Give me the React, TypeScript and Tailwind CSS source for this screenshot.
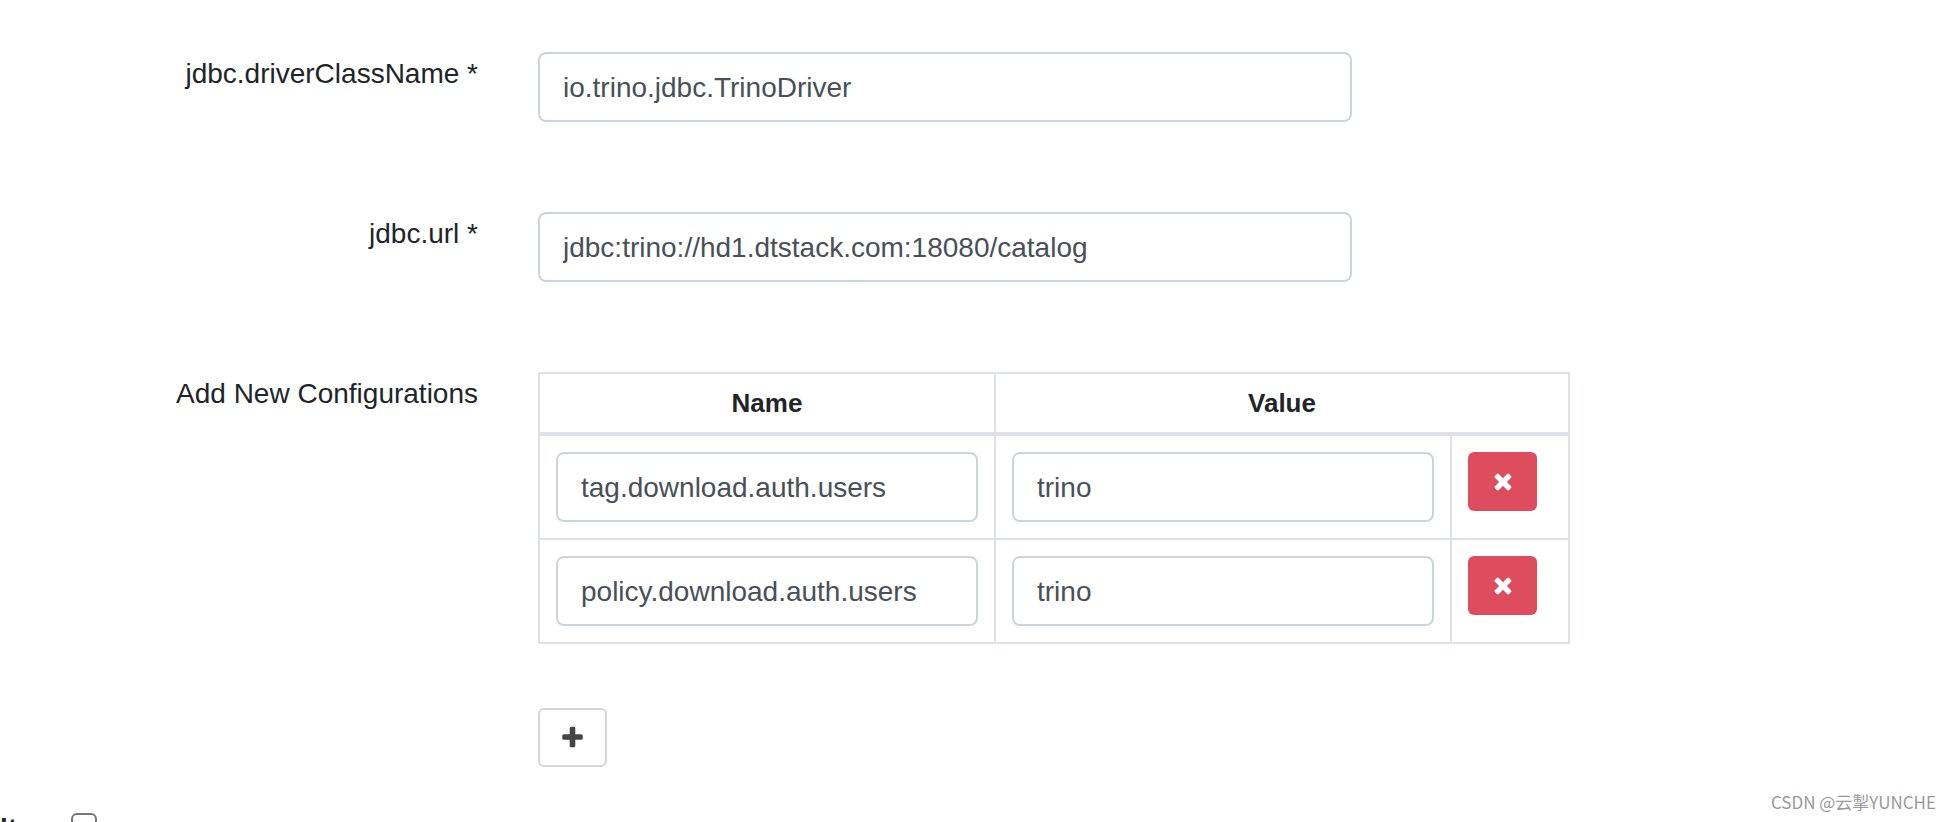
import { useState } from 'react';

interface Config {
    id: number;
    name: string;
    value: string;
}

const inputClass =
    'block w-full h-[70px] px-[23px] pt-0.5 text-[28px] leading-[42px] text-[#495057] bg-white border-2 border-[#ced4da] rounded-lg outline-none';

function CloseIcon() {
    return (
        <svg className="w-5 h-[26px]" viewBox="0 64 1408 1792" fill="currentColor" aria-hidden="true">
            <path d="M1298 1322q0 40-28 68l-136 136q-28 28-68 28t-68-28l-294-294-294 294q-28 28-68 28t-68-28l-136-136q-28-28-28-68t28-68l294-294-294-294q-28-28-28-68t28-68l136-136q28-28 68-28t68 28l294 294 294-294q28-28 68-28t68 28l136 136q28 28 28 68t-28 68l-294 294 294 294q28 28 28 68z" />
        </svg>
    );
}

function PlusIcon() {
    return (
        <svg className="w-[21px] h-[26px]" viewBox="0 64 1408 1792" fill="currentColor" aria-hidden="true">
            <path d="M1408 800v192q0 40-28 68t-68 28h-416v416q0 40-28 68t-68 28h-192q-40 0-68-28t-28-68v-416h-416q-40 0-68-28t-28-68v-192q0-40 28-68t68-28h416v-416q0-40 28-68t68-28h192q40 0 68 28t28 68v416h416q40 0 68 28t28 68z" />
        </svg>
    );
}

export default function App() {
    const [driver, setDriver] = useState('io.trino.jdbc.TrinoDriver');
    const [url, setUrl] = useState('jdbc:trino://hd1.dtstack.com:18080/catalog');
    const [configs, setConfigs] = useState<Config[]>([
        { id: 1, name: 'tag.download.auth.users', value: 'trino' },
        { id: 2, name: 'policy.download.auth.users', value: 'trino' },
    ]);
    const [audit, setAudit] = useState(false);

    const updateConfig = (id: number, changes: Partial<Config>) => {
        setConfigs(configs.map((c) => (c.id === id ? { ...c, ...changes } : c)));
    };

    return (
        <main className="relative h-screen overflow-hidden bg-white font-['Liberation_Sans',Arial,sans-serif] text-[28px] leading-[42px] text-[#212529]">
            <form className="pt-[52px] pl-[71px] pr-[133px]" onSubmit={(e) => e.preventDefault()}>
                <div className="grid grid-cols-12 mb-[90px]">
                    <label htmlFor="driver" className="col-span-3 pt-px pr-[30px] text-right">
                        jdbc.driverClassName *
                    </label>
                    <div className="col-span-6 px-[30px]">
                        <input id="driver" type="text" className={inputClass} value={driver} onChange={(e) => setDriver(e.target.value)} />
                    </div>
                </div>

                <div className="grid grid-cols-12 mb-[90px]">
                    <label htmlFor="url" className="col-span-3 pt-px pr-[30px] text-right">
                        jdbc.url *
                    </label>
                    <div className="col-span-6 px-[30px]">
                        <input id="url" type="text" className={inputClass} value={url} onChange={(e) => setUrl(e.target.value)} />
                    </div>
                </div>

                <div className="grid grid-cols-12">
                    <div id="configs-label" className="col-span-3 pt-px pr-[30px] text-right">
                        Add New Configurations
                    </div>
                    <div className="col-span-9 pl-[30px]">
                        <table aria-labelledby="configs-label" className="w-full max-w-[1032px] table-fixed border-collapse border-2 border-[#dee2e6]">
                            <colgroup>
                                <col />
                                <col />
                                <col className="w-[118px]" />
                            </colgroup>
                            <thead>
                                <tr className="h-[61px] text-[26px] leading-[26px]">
                                    <th className="border-2 border-b-4 border-[#dee2e6]">Name</th>
                                    <th colSpan={2} className="border-2 border-b-4 border-[#dee2e6]">Value</th>
                                </tr>
                            </thead>
                            <tbody>
                                {configs.map((config) => (
                                    <tr key={config.id}>
                                        <td className="p-4 border-2 border-[#dee2e6]">
                                            <input
                                                type="text"
                                                aria-label="Name"
                                                className={inputClass}
                                                value={config.name}
                                                onChange={(e) => updateConfig(config.id, { name: e.target.value })}
                                            />
                                        </td>
                                        <td className="p-4 border-2 border-[#dee2e6]">
                                            <input
                                                type="text"
                                                aria-label="Value"
                                                className={inputClass}
                                                value={config.value}
                                                onChange={(e) => updateConfig(config.id, { value: e.target.value })}
                                            />
                                        </td>
                                        <td className="p-4 align-top border-2 border-[#dee2e6]">
                                            <button
                                                type="button"
                                                aria-label="Remove"
                                                className="flex items-center justify-center w-[69px] h-[59px] rounded-md bg-[#de4d5e] text-white"
                                                onClick={() => setConfigs(configs.filter((c) => c.id !== config.id))}
                                            >
                                                <CloseIcon />
                                            </button>
                                        </td>
                                    </tr>
                                ))}
                            </tbody>
                        </table>
                        <button
                            type="button"
                            aria-label="Add"
                            className="mt-16 flex items-center justify-center w-[69px] h-[59px] rounded-md border-2 border-[#d6d6d6] bg-white text-[#444]"
                            onClick={() => setConfigs([...configs, { id: Date.now(), name: '', value: '' }])}
                        >
                            <PlusIcon />
                        </button>
                    </div>
                </div>
            </form>

            {/* Audit filter row, cut off by the bottom of the window */}
            <div className="mt-[46px] flex items-start">
                <label htmlFor="audit" className="w-[71px] whitespace-nowrap font-bold leading-8">
                    lt
                </label>
                <input
                    id="audit"
                    type="checkbox"
                    className="appearance-none w-[26px] h-[26px] rounded-md border-2 border-[#767676] bg-white checked:bg-[#767676]"
                    checked={audit}
                    onChange={(e) => setAudit(e.target.checked)}
                />
            </div>

            <div className="absolute right-4 bottom-1 font-['Noto_Sans_CJK_SC',sans-serif] text-[17px] leading-8 text-[#999]">
                CSDN @云掣YUNCHE
            </div>
        </main>
    );
}
